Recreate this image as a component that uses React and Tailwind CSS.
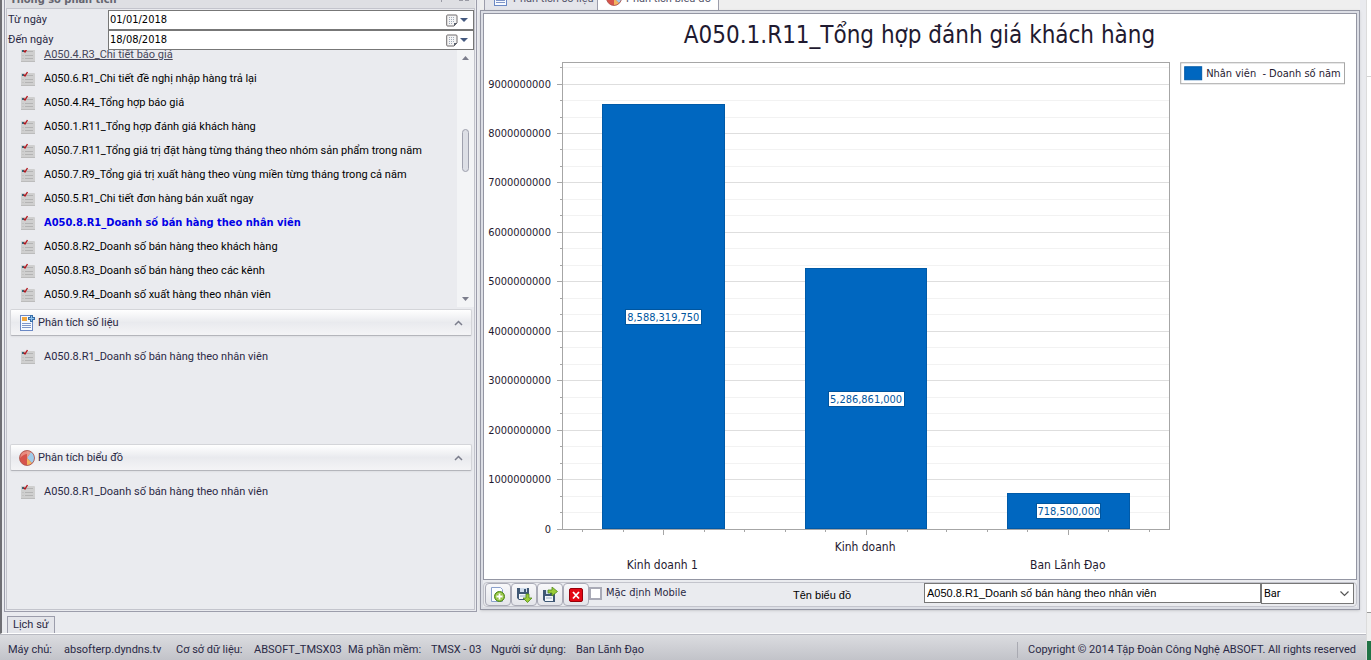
import React from 'react';

const REPORTS = [
  'A050.4.R3_Chi tiết báo giá',
  'A050.6.R1_Chi tiết đề nghị nhập hàng trả lại',
  'A050.4.R4_Tổng hợp báo giá',
  'A050.1.R11_Tổng hợp đánh giá khách hàng',
  'A050.7.R11_Tổng giá trị đặt hàng từng tháng theo nhóm sản phẩm trong năm',
  'A050.7.R9_Tổng giá trị xuất hàng theo vùng miền từng tháng trong cả năm',
  'A050.5.R1_Chi tiết đơn hàng bán xuất ngay',
  'A050.8.R1_Doanh số bán hàng theo nhân viên',
  'A050.8.R2_Doanh số bán hàng theo khách hàng',
  'A050.8.R3_Doanh số bán hàng theo các kênh',
  'A050.9.R4_Doanh số xuất hàng theo nhân viên',
];

const BARS = [
  { name: 'Kinh doanh 1', value: 8588319750, label: '8,588,319,750', labelY: 555 },
  { name: 'Kinh doanh', value: 5286861000, label: '5,286,861,000', labelY: 537 },
  { name: 'Ban Lãnh Đạo', value: 718500000, label: '718,500,000', labelY: 555 },
];

function ReportIcon() {
  return (
    <svg width="16" height="16" viewBox="0 0 16 16" className="shrink-0" aria-hidden="true">
      <rect x="1" y="2" width="14" height="13" rx="1" fill="#cfcfcf" />
      <path d="M1 14.500h14" stroke="#bcbcbc" />
      <path d="M6 4.500h7M2.500 8.500h1M5 8.500h8M2.500 11.500h1M5 11.500h8" stroke="#b4b4b4" />
      <path d="M2 4h2" stroke="#287080" strokeWidth="2" />
      <path d="M3.500 3.500l1.500 1.500L7.500 1" stroke="#b4141c" strokeWidth="1.400" fill="none" />
    </svg>
  );
}

function SheetIcon({ plus }) {
  return (
    <svg width="16" height="16" viewBox="0 0 16 16" className="shrink-0" aria-hidden="true">
      <rect x="1.500" y=".5" width="12" height="15" fill="#f7faff" stroke="#6a88c4" />
      <rect x="3" y="2" width="5" height="4" fill="#f1a63c" />
      <path d="M3 8.500h9M3 10.500h9M3 12.500h9" stroke="#8096c8" />
      {plus && <path d="M12.500 0v7M9 3.500h7" stroke="#376da8" strokeWidth="3" />}
      {plus && <path d="M12.500 1v5M10 3.500h5" stroke="#8fc2ea" />}
    </svg>
  );
}

function PieIcon() {
  return (
    <svg width="16" height="16" viewBox="0 0 16 16" className="shrink-0" aria-hidden="true">
      <circle cx="8" cy="8" r="7.500" fill="#d6534b" />
      <path d="M8 1a7 7 0 0 0-7 7c3-3 5-4 7-4z" fill="#e88b80" />
      <path d="M8 8l4-6.300a7.300 7.300 0 0 1 1 11.600z" fill="#9fcbea" />
      <path d="M8 8l5 5.300A7 7 0 0 1 8 15.300z" fill="#f2b45f" />
      <path d="M8 8V.8a7 7 0 0 1 4 1.100z" fill="#e79a8b" />
      <circle cx="8" cy="8" r="7.500" fill="none" stroke="#a8544c" strokeWidth=".8" />
    </svg>
  );
}

function CalendarButton({ label }) {
  return (
    <button type="button" aria-label={label} className="flex h-full items-center gap-0.5 pr-[5px]">
      <svg width="12" height="13" viewBox="0 0 12 13" aria-hidden="true">
        <path d="M1.500 1h8.500q1 0 1 1v7l-3 3H1.500q-.8 0-.8-1V2q0-1 .8-1z" fill="#f4f4f4" stroke="#6e6a6c" />
        <path d="M3 3.500h6M3 5.500h6M3 7.500h6M3 9.500h4" stroke="#a0aaba" strokeDasharray="1 1" />
        <path d="M8 12V9h3z" fill="#5d6470" />
      </svg>
      <svg width="8" height="4" viewBox="0 0 8 4" aria-hidden="true">
        <path d="M0 0h8L4 4z" fill="#44597f" />
      </svg>
    </button>
  );
}

function DateRow({ id, label, value }) {
  return (
    <div className="flex h-5 items-center">
      <label htmlFor={id} className="w-[100px] shrink-0 text-[#2a2945]">{label}</label>
      <div className="flex h-5 min-w-0 flex-1 items-center border border-[#777] bg-white">
        <input id={id} defaultValue={value} className="min-w-0 flex-1 bg-transparent pl-px font-['DejaVu_Sans_Condensed',sans-serif] text-black outline-none" />
        <CalendarButton label={'Chọn ' + label} />
      </div>
    </div>
  );
}

function SectionHeader({ icon, children }) {
  return (
    <button
      type="button"
      className="flex h-[27px] w-full shrink-0 items-center gap-[3px] rounded-xs border border-[#d4d5d9] border-b-[#b4b5bb] bg-linear-to-b from-white via-[#e9eaee] to-[#f4f4f6] px-2 text-left text-[#2a2945] shadow-xs"
    >
      {icon}
      <span className="flex-1">{children}</span>
      <svg width="9" height="6" viewBox="0 0 9 6" aria-hidden="true">
        <path d="M1 5l3.500-3.500L8 5" fill="none" stroke="#7b7d8c" strokeWidth="1.500" />
      </svg>
    </button>
  );
}

function SectionItem({ children }) {
  return (
    <a href="#report" className="flex h-6 items-center gap-2 pl-2.5 text-[#2a2945]">
      <ReportIcon />
      <span>{children}</span>
    </a>
  );
}

function LeftPanel() {
  return (
    <aside className="flex w-[473px] shrink-0 flex-col border border-t-0 border-[#9c9dab] bg-[#eaebef] p-px pt-0">
      <div className="flex h-2 shrink-0 items-end justify-between overflow-hidden bg-[#dedfe3] px-1">
        <h2 className="h-4 font-['DejaVu_Sans_Condensed',sans-serif] font-bold leading-4 text-[#65656f]">Thông số phân tích</h2>
        <svg width="34" height="8" viewBox="0 0 34 8" aria-hidden="true">
          <path d="M4.500 0v2M22 .5h4M28 .5h4" stroke="#9a9ba5" />
        </svg>
      </div>
      <div className="flex flex-1 flex-col border border-[#c3c4cc] pl-px">
        <div className="flex flex-col pt-px">
          <DateRow id="from-date" label="Từ ngày" value="01/01/2018" />
          <DateRow id="to-date" label="Đến ngày" value="18/08/2018" />
        </div>
        <div className="flex h-[257px] shrink-0 overflow-hidden">
          <ul className="flex min-w-0 flex-1 flex-col justify-end pl-3">
            {REPORTS.map((name, i) => (
              <li key={name} className="shrink-0">
                <a
                  href="#report"
                  className={
                    'flex h-6 items-center gap-2 whitespace-nowrap ' +
                    (i === 0
                      ? 'text-[#46465a] underline'
                      : i === 7
                        ? "font-['DejaVu_Sans_Condensed',sans-serif] font-bold text-[#0000e6]"
                        : 'text-black')
                  }
                >
                  <ReportIcon />
                  <span>{name}</span>
                </a>
              </li>
            ))}
          </ul>
          <div className="flex w-[17px] shrink-0 flex-col items-center bg-[#f3f4f6] py-1.5">
            <svg width="7" height="4" viewBox="0 0 7 4" aria-hidden="true"><path d="M0 4h7L3.500 0z" fill="#7b7d8c" /></svg>
            <div className="mt-[69px] h-[43px] w-[7px] rounded-sm border border-[#9fa1ae] bg-[#dddfe6]" />
            <svg width="7" height="4" viewBox="0 0 7 4" className="mt-auto" aria-hidden="true"><path d="M0 0h7L3.500 4z" fill="#7b7d8c" /></svg>
          </div>
        </div>
        <div className="flex flex-col px-0.5 pt-0.5">
          <section className="flex h-[135px] flex-col gap-[9px]">
            <SectionHeader icon={<SheetIcon plus />}>Phân tích số liệu</SectionHeader>
            <SectionItem>A050.8.R1_Doanh số bán hàng theo nhân viên</SectionItem>
          </section>
          <section className="flex flex-col gap-[9px]">
            <SectionHeader icon={<PieIcon />}>Phân tích biểu đồ</SectionHeader>
            <SectionItem>A050.8.R1_Doanh số bán hàng theo nhân viên</SectionItem>
          </section>
        </div>
      </div>
    </aside>
  );
}

/* Coordinates below are in the chart's own viewBox of 873 x 565. */
const PLOT = { left: 78.5, right: 686.5, top: 48.5, bottom: 515.5 };
const UNIT = 49.44;
const SLOT = (PLOT.right - PLOT.left) / 3;

function Chart() {
  const steps = Array.from({ length: 29 }, (_, i) => i);
  return (
    <svg viewBox="0 0 873 565" className="min-h-0 w-full flex-1" role="img" aria-label="Biểu đồ doanh số">
      <text x="436" y="29" textAnchor="middle" fontSize="24" fill="#1f1a30">A050.1.R11_Tổng hợp đánh giá khách hàng</text>
      <g shapeRendering="crispEdges" fill="none">
        {steps.map((i) => {
          const y = Math.round(PLOT.bottom - (i * UNIT) / 3) - 0.5;
          const major = i % 3 === 0;
          return (
            <g key={i}>
              {i > 0 && <path d={`M${PLOT.left} ${y}H${PLOT.right}`} stroke={major ? '#dedede' : '#f2f2f2'} />}
              <path d={`M${PLOT.left - (major ? 5 : 2)} ${y}H${PLOT.left}`} stroke="#a6a6a6" />
            </g>
          );
        })}
        {Array.from({ length: 15 }, (_, i) => {
          const x = Math.floor(PLOT.left + (SLOT * (i + 0.5)) / 5) + 0.5;
          return <path key={i} d={`M${x} 516v${i % 5 === 2 ? 5 : 2}`} stroke="#a6a6a6" />;
        })}
        <rect x={PLOT.left} y={PLOT.top} width={PLOT.right - PLOT.left} height={PLOT.bottom - PLOT.top} stroke="#a6a6a6" />
      </g>
      <g fontSize="11" fill="#1f1a30" textAnchor="end">
        {Array.from({ length: 10 }, (_, i) => (
          <text key={i} x="67" y={Math.round(PLOT.bottom - i * UNIT) + 3}>{i * 1000000000}</text>
        ))}
      </g>
      {BARS.map((bar, i) => {
        const cx = Math.floor(PLOT.left + SLOT * (i + 0.5)) + 0.5;
        const h = Math.round((bar.value / 1e9) * UNIT);
        const cy = Math.round(515 - h / 2);
        const w = bar.label.length * 6 - 2;
        return (
          <g key={bar.name} textAnchor="middle">
            <rect x={cx - 61} y={515.5 - h} width="122" height={h - 1} fill="#0067c0" stroke="#005aa8" shapeRendering="crispEdges" />
            <rect x={cx - w / 2} y={cy - 7.5} width={w} height="15" fill="#fff" stroke="#00559e" shapeRendering="crispEdges" />
            <text x={cx} y={cy + 4} fontSize="11" fill="#00559e">{bar.label}</text>
            <text x={cx - 1} y={bar.labelY} fontSize="12" fill="#1f1a30">{bar.name}</text>
          </g>
        );
      })}
      <rect x="697.5" y="48.500" width="164" height="21" fill="#fff" stroke="#a6a6a6" />
      <rect x="701.5" y="52.500" width="17" height="13" fill="#0067c0" stroke="#005aa8" />
      <text x="723" y="63" fontSize="11" fill="#1f1a30" xmlSpace="preserve">Nhân viên  - Doanh số năm</text>
    </svg>
  );
}

function ToolButton({ label, children }) {
  return (
    <button
      type="button"
      aria-label={label}
      className="flex h-[23px] w-[26px] shrink-0 items-center justify-center rounded-sm border border-[#a9aab6] bg-linear-to-b from-[#f8f8fa] to-[#e4e5ea]"
    >
      <svg width="16" height="16" viewBox="0 0 16 16" aria-hidden="true">{children}</svg>
    </button>
  );
}

function Floppy() {
  return (
    <>
      <path d="M1 1h12v12H3l-2-2z" fill="#3f5875" />
      <rect x="4" y="1" width="7" height="4" fill="#cfdcec" />
      <rect x="8" y="2" width="2" height="3" fill="#3f5875" />
      <rect x="3" y="7" width="8" height="5" fill="#f3f6fa" />
      <path d="M4 9h6" stroke="#9cb0c8" />
    </>
  );
}

function Toolbar() {
  return (
    <div className="flex h-[25px] shrink-0 items-center rounded-sm border border-[#c3c4cc] pl-px pr-0.5">
      <ToolButton label="Thêm">
        <path d="M1.500.5h9l2 2v12h-11z" fill="#fbfdff" stroke="#8ba0cc" />
        <circle cx="9.500" cy="9.500" r="5" fill="#86b82f" stroke="#4f8a1c" />
        <circle cx="9.500" cy="9.500" r="3.500" fill="none" stroke="#b9dc77" strokeWidth=".7" />
        <path d="M9.500 6.500v6M6.500 9.500h6" stroke="#fff" strokeWidth="1.800" />
      </ToolButton>
      <ToolButton label="Lưu">
        <Floppy />
        <path d="M10 7h3v4h3l-4.500 4.500L7 11h3z" fill="#9ccc38" stroke="#4f8a1c" strokeWidth=".8" />
      </ToolButton>
      <ToolButton label="Xuất">
        <g transform="translate(0 2)"><Floppy /></g>
        <path d="M6 3h4V0l5.500 4.500L10 9V6H6z" fill="#9ccc38" stroke="#4f8a1c" strokeWidth=".8" />
      </ToolButton>
      <ToolButton label="Xóa">
        <rect x="1.500" y="1.500" width="13" height="13" rx="1.500" fill="#e30613" stroke="#96000a" />
        <path d="M5 5l6 6.500M11 5l-6 6.500" stroke="#fff" strokeWidth="1.800" />
      </ToolButton>
      <label className="flex items-center gap-1 self-start pt-0.5 font-['DejaVu_Sans_Condensed',sans-serif] text-[#2a2945]">
        <input type="checkbox" className="size-[13px] appearance-none border-2 border-[#a9aab6] bg-white" />
        Mặc định Mobile
      </label>
      <label htmlFor="chart-name" className="ml-auto w-[131px] shrink-0 font-['Liberation_Sans',sans-serif] text-black">Tên biểu đồ</label>
      <input
        id="chart-name"
        defaultValue="A050.8.R1_Doanh số bán hàng theo nhân viên"
        className="h-5 w-[337px] self-start border border-[#777] bg-white px-0.5 font-['Liberation_Sans',sans-serif] text-black outline-none"
      />
      <div className="flex h-[21px] w-[93px] items-center self-start border border-[#777] bg-white pr-1">
        <select aria-label="Kiểu biểu đồ" className="min-w-0 flex-1 appearance-none bg-transparent pl-0.5 text-black outline-none">
          <option>Bar</option>
        </select>
        <svg width="9" height="6" viewBox="0 0 9 6" className="shrink-0" aria-hidden="true">
          <path d="M.5.500l4 4 4-4" fill="none" stroke="#555" strokeWidth="1.200" />
        </svg>
      </div>
    </div>
  );
}

function Tab({ active, icon, children }) {
  return (
    <button
      type="button"
      className={
        'flex h-[18px] shrink-0 items-end gap-1 border-r border-[#9c9dab] px-2 text-[#55556a] ' +
        (active ? 'w-[121px] bg-white' : 'w-[114px] border-l bg-[#e4e5ea]')
      }
    >
      <span className="flex pb-1">{icon}</span>
      <span className="whitespace-nowrap pb-[3px]">{children}</span>
    </button>
  );
}

function RightPanel() {
  return (
    <main className="flex min-w-0 flex-1 flex-col">
      <nav className="flex h-2.5 shrink-0 items-end overflow-hidden bg-[#efefef] pl-1">
        <Tab icon={<SheetIcon />}>Phân tích số liệu</Tab>
        <Tab active icon={<PieIcon />}>Phân tích biểu đồ</Tab>
      </nav>
      <div className="flex min-h-0 flex-1 flex-col border border-[#9496a3] bg-[#dcdee5] p-0.5 shadow-sm">
        <div className="flex min-h-0 flex-1 flex-col gap-0.5 bg-[#eaebef]">
          <div className="flex min-h-0 flex-1 flex-col border border-[#9496a3] bg-white font-['DejaVu_Sans_Condensed','DejaVu_Sans',sans-serif]">
            <Chart />
          </div>
          <Toolbar />
        </div>
      </div>
    </main>
  );
}

const STATUS = [
  ['Máy chủ:', 'w-[56px]'],
  ['absofterp.dyndns.tv', 'w-[112px]'],
  ['Cơ sở dữ liệu:', 'w-[78px]'],
  ['ABSOFT_TMSX03', 'w-[94px]'],
  ['Mã phần mềm:', 'w-[83px]'],
  ['TMSX - 03', 'w-[60px]'],
  ['Người sử dụng:', 'w-[85px]'],
  ['Ban Lãnh Đạo', 'w-[80px]'],
];

function StatusBar() {
  return (
    <footer className="flex h-[26px] shrink-0 items-center border-t border-[#b9bac2] bg-linear-to-b from-[#dbdce0] to-[#c2c3c9] pl-2 pt-1 text-[#2a2945]">
      {STATUS.map(([text, width]) => (
        <span key={text} className={'shrink-0 whitespace-nowrap ' + width}>{text}</span>
      ))}
      <span className="ml-auto whitespace-nowrap border-l border-[#a9aab2] pl-2.5 pr-2.5">
        Copyright © 2014 Tập Đoàn Công Nghệ ABSOFT. All rights reserved
      </span>
    </footer>
  );
}

export default function App() {
  return (
    <div className="flex h-screen overflow-hidden bg-[#eaebef] font-[Roboto,'DejaVu_Sans_Condensed',sans-serif] text-[11px] leading-4">
      <div className="flex min-w-0 flex-1 flex-col">
        <div className="flex min-h-0 flex-1 flex-col border-b border-white border-l-2 border-l-[#6f6f74] pl-0.5">
          <div className="flex min-h-0 flex-1">
            <div className="flex shrink-0 flex-col items-start gap-1 pr-[3px]">
              <div className="flex min-h-0 flex-1"><LeftPanel /></div>
              <button type="button" className="ml-[3px] h-[17px] shrink-0 border border-b-0 border-[#9c9dab] bg-[#e4e5ea] px-[5px] text-[#2a2945]">
                Lịch sử
              </button>
            </div>
            <div className="flex min-w-0 flex-1 flex-col pb-[23px] pr-1.5"><RightPanel /></div>
          </div>
        </div>
        <StatusBar />
      </div>
      <div className="flex w-[5px] shrink-0 flex-col justify-between border-l border-[#dcdcdc] bg-white pt-19">
        <div className="border-t border-[#d4d4d4]" />
        <div className="h-12 border-t border-[#9a9a9a] bg-[#efefef] pt-7"><div className="h-5 bg-[#217346]" /></div>
      </div>
    </div>
  );
}
